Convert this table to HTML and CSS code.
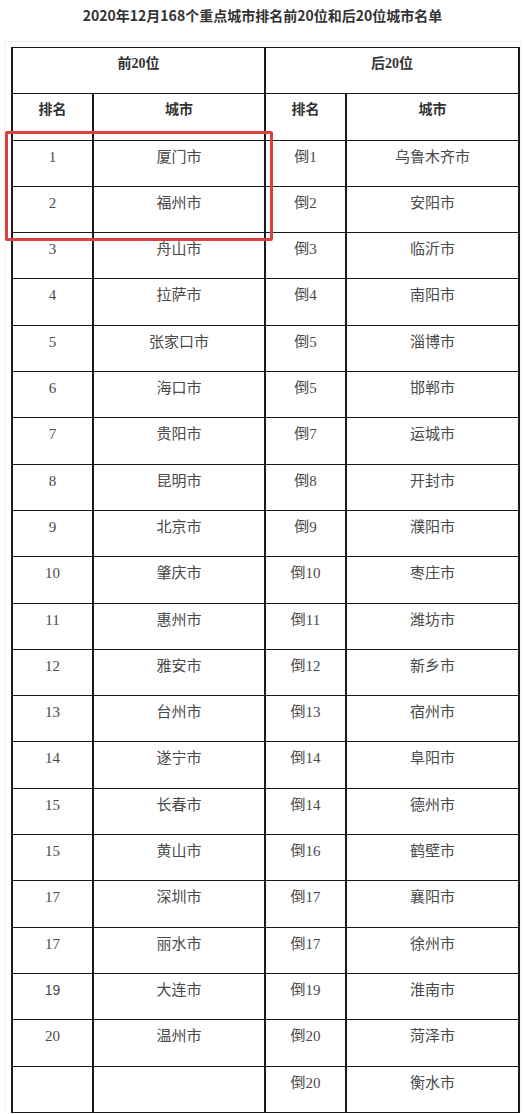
FILE: index.html
```html
<!DOCTYPE html>
<html lang="zh-CN">
<head>
<meta charset="utf-8">
<title>2020年12月168个重点城市排名</title>
<link rel="stylesheet" href="styles.css">
</head>
<body>
<h1 class="title">2020年12月168个重点城市排名前20位和后20位城市名单</h1>
<div class="frame">
  <table class="rank">
    <colgroup>
      <col class="c-rank"><col class="c-city"><col class="c-rank"><col class="c-city2">
    </colgroup>
    <thead>
      <tr><th colspan="2">前20位</th><th colspan="2">后20位</th></tr>
      <tr><th>排名</th><th>城市</th><th>排名</th><th>城市</th></tr>
    </thead>
    <tbody>
      <tr><td>1</td><td>厦门市</td><td>倒1</td><td>乌鲁木齐市</td></tr>
      <tr><td>2</td><td>福州市</td><td>倒2</td><td>安阳市</td></tr>
      <tr><td>3</td><td>舟山市</td><td>倒3</td><td>临沂市</td></tr>
      <tr><td>4</td><td>拉萨市</td><td>倒4</td><td>南阳市</td></tr>
      <tr><td>5</td><td>张家口市</td><td>倒5</td><td>淄博市</td></tr>
      <tr><td>6</td><td>海口市</td><td>倒5</td><td>邯郸市</td></tr>
      <tr><td>7</td><td>贵阳市</td><td>倒7</td><td>运城市</td></tr>
      <tr><td>8</td><td>昆明市</td><td>倒8</td><td>开封市</td></tr>
      <tr><td>9</td><td>北京市</td><td>倒9</td><td>濮阳市</td></tr>
      <tr><td>10</td><td>肇庆市</td><td>倒10</td><td>枣庄市</td></tr>
      <tr><td>11</td><td>惠州市</td><td>倒11</td><td>潍坊市</td></tr>
      <tr><td>12</td><td>雅安市</td><td>倒12</td><td>新乡市</td></tr>
      <tr><td>13</td><td>台州市</td><td>倒13</td><td>宿州市</td></tr>
      <tr><td>14</td><td>遂宁市</td><td>倒14</td><td>阜阳市</td></tr>
      <tr><td>15</td><td>长春市</td><td>倒14</td><td>德州市</td></tr>
      <tr><td>15</td><td>黄山市</td><td>倒16</td><td>鹤壁市</td></tr>
      <tr><td>17</td><td>深圳市</td><td>倒17</td><td>襄阳市</td></tr>
      <tr><td>17</td><td>丽水市</td><td>倒17</td><td>徐州市</td></tr>
      <tr><td class="sans">19</td><td>大连市</td><td>倒19</td><td>淮南市</td></tr>
      <tr><td>20</td><td>温州市</td><td>倒20</td><td>菏泽市</td></tr>
      <tr><td></td><td></td><td>倒20</td><td>衡水市</td></tr>
    </tbody>
  </table>
  <div class="highlight"></div>
</div>
</body>
</html>
```

FILE: styles.css
```css
html, body {
  margin: 0;
  padding: 0;
  background: #ffffff;
}

.title {
  margin: 0;
  padding-top: 5px;
  height: 20px;
  line-height: 20px;
  font-family: "Noto Sans CJK SC", "Noto Sans", sans-serif;
  font-size: 14px;
  font-weight: bold;
  color: #333333;
  text-align: center;
}

.frame {
  position: relative;
  margin: 16px 4px 0 4px;
  padding: 5px 2px 0 6px;
  border-top: 1px solid #ececec;
  border-left: 1px solid #f2f2f2;
  border-right: 1px solid #f2f2f2;
  width: 507px;
}

.rank {
  width: 507px;
  table-layout: fixed;
  border-collapse: collapse;
  font-family: "Liberation Serif", "Noto Sans CJK SC", serif;
  font-size: 15px;
  color: #4a4a4a;
}

.c-rank { width: 81px; }
.c-city { width: 172px; }
.c-city2 { width: 173px; }

.rank tr {
  height: 46.3px;
}

.rank th,
.rank td {
  border-top: 1px solid #1a1a1a;
  border-bottom: 1px solid #1a1a1a;
  border-left: 2px solid #1a1a1a;
  border-right: 2px solid #1a1a1a;
  padding: 6px 0 0 0;
  vertical-align: top;
  text-align: center;
  line-height: 20px;
}

.rank th {
  font-size: 14px;
  font-weight: bold;
  color: #333333;
}

.rank td.sans {
  font-family: "Liberation Sans", sans-serif;
  font-size: 14px;
}

.highlight {
  position: absolute;
  left: 0px;
  top: 89px;
  width: 262px;
  height: 104px;
  border: 3px solid #d9403f;
  border-radius: 2px;
}
```
